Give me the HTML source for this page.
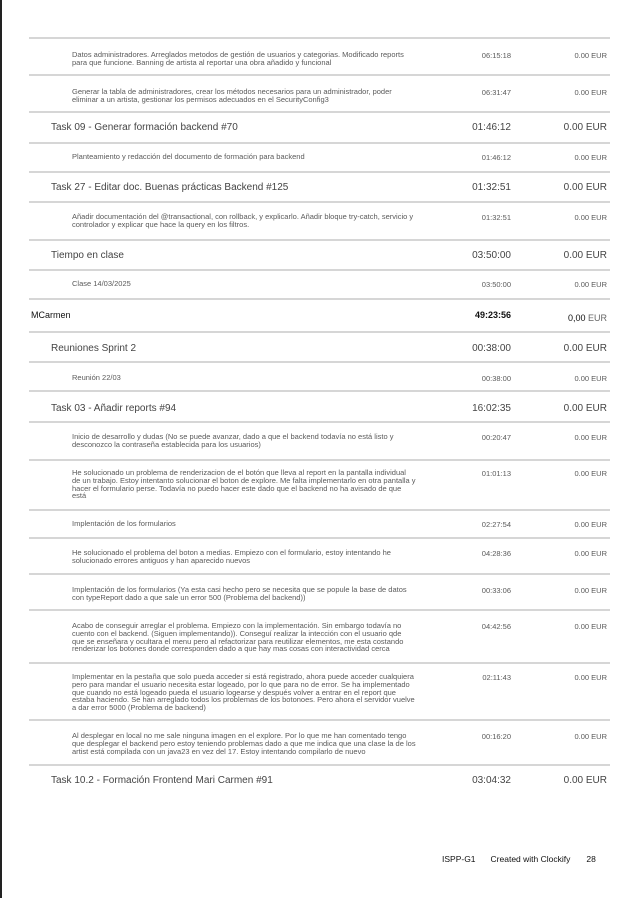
<!DOCTYPE html>
<html><head><meta charset="utf-8"><style>
*{margin:0;padding:0;box-sizing:border-box}
body{width:635px;height:898px;background:#fff;position:relative;overflow:hidden;font-family:"Liberation Sans",Arial,sans-serif}
.lb{position:absolute;left:0;top:0;width:2px;height:898px;background:#222}
.ln{position:absolute;left:29px;width:581px;height:2px;background:#d6d6d6}
.s{position:absolute;left:72px;font-size:7.5px;line-height:7.8px;color:#5a5a5a;white-space:nowrap}
.st{position:absolute;right:124px;font-size:7.5px;color:#5a5a5a}
.se{position:absolute;right:28px;font-size:7.5px;color:#5a5a5a}
.b{position:absolute;left:51px;font-size:10px;color:#444;white-space:nowrap}
.bt{position:absolute;right:124px;font-size:10px;color:#444}
.be{position:absolute;right:28px;font-size:10px;color:#444}
</style></head><body>
<div class="lb"></div>
<div class="ln" style="top:37px"></div>
<div class="s" style="top:51px">Datos administradores. Arreglados metodos de gestión de usuarios y categorias. Modificado reports<br>para que funcione. Banning de artista al reportar una obra añadido y funcional</div>
<div class="st" style="top:51px">06:15:18</div><div class="se" style="top:51px">0.00 EUR</div>
<div class="ln" style="top:74px"></div>
<div class="s" style="top:88px">Generar la tabla de administradores, crear los métodos necesarios para un administrador, poder<br>eliminar a un artista, gestionar los permisos adecuados en el SecurityConfig3</div>
<div class="st" style="top:88px">06:31:47</div><div class="se" style="top:88px">0.00 EUR</div>
<div class="ln" style="top:111px"></div>
<div class="b" style="top:122px">Task 09 - Generar formación backend #70</div>
<div class="bt" style="top:122px">01:46:12</div><div class="be" style="top:122px">0.00 EUR</div>
<div class="ln" style="top:142px"></div>
<div class="s" style="top:153px">Planteamiento y redacción del documento de formación para backend</div>
<div class="st" style="top:153px">01:46:12</div><div class="se" style="top:153px">0.00 EUR</div>
<div class="ln" style="top:171px"></div>
<div class="b" style="top:182px">Task 27 - Editar doc. Buenas prácticas Backend #125</div>
<div class="bt" style="top:182px">01:32:51</div><div class="be" style="top:182px">0.00 EUR</div>
<div class="ln" style="top:201px"></div>
<div class="s" style="top:213px">Añadir documentación del @transactional, con rollback, y explicarlo. Añadir bloque try-catch, servicio y<br>controlador y explicar que hace la query en los filtros.</div>
<div class="st" style="top:213px">01:32:51</div><div class="se" style="top:213px">0.00 EUR</div>
<div class="ln" style="top:239px"></div>
<div class="b" style="top:250px">Tiempo en clase</div>
<div class="bt" style="top:250px">03:50:00</div><div class="be" style="top:250px">0.00 EUR</div>
<div class="ln" style="top:269px"></div>
<div class="s" style="top:280px">Clase 14/03/2025</div>
<div class="st" style="top:280px">03:50:00</div><div class="se" style="top:280px">0.00 EUR</div>
<div class="ln" style="top:298px"></div>
<div style="position:absolute;left:31px;top:310px;font-size:9px;color:#111">MCarmen</div>
<div style="position:absolute;right:124px;top:310px;font-size:9px;color:#111;font-weight:bold">49:23:56</div>
<div style="position:absolute;right:28px;top:313px;font-size:9px;color:#666"><span style="color:#111">0,00</span> EUR</div>
<div class="ln" style="top:331px"></div>
<div class="b" style="top:343px">Reuniones Sprint 2</div>
<div class="bt" style="top:343px">00:38:00</div><div class="be" style="top:343px">0.00 EUR</div>
<div class="ln" style="top:361px"></div>
<div class="s" style="top:374px">Reunión 22/03</div>
<div class="st" style="top:374px">00:38:00</div><div class="se" style="top:374px">0.00 EUR</div>
<div class="ln" style="top:390px"></div>
<div class="b" style="top:403px">Task 03 - Añadir reports #94</div>
<div class="bt" style="top:403px">16:02:35</div><div class="be" style="top:403px">0.00 EUR</div>
<div class="ln" style="top:421px"></div>
<div class="s" style="top:433px">Inicio de desarrollo y dudas (No se puede avanzar, dado a que el backend todavía no está listo y<br>desconozco la contraseña establecida para los usuarios)</div>
<div class="st" style="top:433px">00:20:47</div><div class="se" style="top:433px">0.00 EUR</div>
<div class="ln" style="top:459px"></div>
<div class="s" style="top:469px">He solucionado un problema de renderizacion de el botón que lleva al report en la pantalla individual<br>de un trabajo. Estoy intentanto solucionar el boton de explore. Me falta implementarlo en otra pantalla y<br>hacer el formulario perse. Todavía no puedo hacer este dado que el backend no ha avisado de que<br>está</div>
<div class="st" style="top:469px">01:01:13</div><div class="se" style="top:469px">0.00 EUR</div>
<div class="ln" style="top:509px"></div>
<div class="s" style="top:520px">Implentación de los formularios</div>
<div class="st" style="top:520px">02:27:54</div><div class="se" style="top:520px">0.00 EUR</div>
<div class="ln" style="top:537px"></div>
<div class="s" style="top:549px">He solucionado el problema del boton a medias. Empiezo con el formulario, estoy intentando he<br>solucionado errores antiguos y han aparecido nuevos</div>
<div class="st" style="top:549px">04:28:36</div><div class="se" style="top:549px">0.00 EUR</div>
<div class="ln" style="top:573px"></div>
<div class="s" style="top:586px">Implentación de los formularios (Ya esta casi hecho pero se necesita que se popule la base de datos<br>con typeReport dado a que sale un error 500 (Problema del backend))</div>
<div class="st" style="top:586px">00:33:06</div><div class="se" style="top:586px">0.00 EUR</div>
<div class="ln" style="top:609px"></div>
<div class="s" style="top:622px">Acabo de conseguir arreglar el problema. Empiezo con la implementación. Sin embargo todavía no<br>cuento con el backend. (Siguen implementando)). Conseguí realizar la intección con el usuario qde<br>que se enseñara y ocultara el menu pero al refactorizar para reutilizar elementos, me esta costando<br>renderizar los botones donde corresponden dado a que hay mas cosas con interactividad cerca</div>
<div class="st" style="top:622px">04:42:56</div><div class="se" style="top:622px">0.00 EUR</div>
<div class="ln" style="top:662px"></div>
<div class="s" style="top:673px">Implementar en la pestaña que solo pueda acceder si está registrado, ahora puede acceder cualquiera<br>pero para mandar el usuario necesita estar logeado, por lo que para no de error. Se ha implementado<br>que cuando no está logeado pueda el usuario logearse y después volver a entrar en el report que<br>estaba haciendo. Se han arreglado todos los problemas de los botonoes. Pero ahora el servidor vuelve<br>a dar error 5000 (Problema de backend)</div>
<div class="st" style="top:673px">02:11:43</div><div class="se" style="top:673px">0.00 EUR</div>
<div class="ln" style="top:719px"></div>
<div class="s" style="top:732px">Al desplegar en local no me sale ninguna imagen en el explore. Por lo que me han comentado tengo<br>que desplegar el backend pero estoy teniendo problemas dado a que me indica que una clase la de los<br>artist está compilada con un java23 en vez del 17. Estoy intentando compilarlo de nuevo</div>
<div class="st" style="top:732px">00:16:20</div><div class="se" style="top:732px">0.00 EUR</div>
<div class="ln" style="top:764px"></div>
<div class="b" style="top:775px">Task 10.2 - Formación Frontend Mari Carmen #91</div>
<div class="bt" style="top:775px">03:04:32</div><div class="be" style="top:775px">0.00 EUR</div>
<div style="position:absolute;left:442px;top:854px;font-size:8.5px;color:#111;white-space:nowrap">ISPP-G1<span style="margin-left:15px">Created with Clockify</span><span style="margin-left:16px">28</span></div>
</body></html>
